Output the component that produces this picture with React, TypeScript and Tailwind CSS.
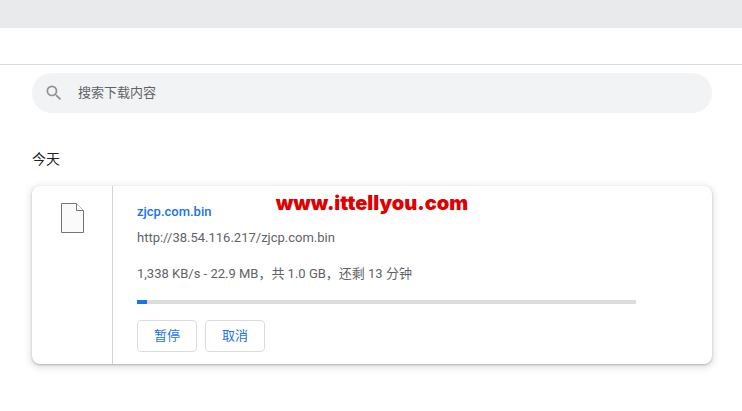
// DownloadsPage — search field on top, then one card per download grouped by day.

interface Download {
  id: string;
  name: string;
  url: string;
  status: string;
  percent: number;
}

const downloads: Download[] = [
  {
    id: "1",
    name: "zjcp.com.bin",
    url: "http://38.54.116.217/zjcp.com.bin",
    status: "1,338 KB/s - 22.9 MB，共 1.0 GB，还剩 13 分钟",
    percent: 2,
  },
];

export default function App() {
  return (
    <div className="min-h-screen bg-white font-['Roboto','Noto_Sans_CJK_SC',sans-serif] text-[13px] leading-5 text-[#5f6368]">
      {/* Browser chrome */}
      <div className="h-7 bg-[#e9eaec]" />
      <div className="h-[37px] border-b border-[#dadbdc]" />

      <main className="px-[30px] pt-2 pl-8">
        <SearchField />
        <h2 className="mt-9 text-sm leading-5 text-[#202124]">今天</h2>
        <div className="mt-[17px] flex flex-col gap-4">
          {downloads.map((item) => (
            <DownloadCard key={item.id} item={item} />
          ))}
        </div>
      </main>
    </div>
  );
}

function SearchField() {
  return (
    <label className="flex h-10 items-center gap-3.5 rounded-full bg-[#f1f3f4] px-3">
      <SearchIcon className="size-5 shrink-0 text-[#8f9194]" />
      <input
        type="search"
        aria-label="搜索下载内容"
        placeholder="搜索下载内容"
        className="min-w-0 flex-1 bg-transparent outline-none placeholder:text-[#5f6368]"
      />
    </label>
  );
}

function DownloadCard({ item }: { item: Download }) {
  return (
    <article className="relative flex rounded-lg bg-white shadow-[0_1px_2px_rgba(60,64,67,0.3),0_2px_6px_2px_rgba(60,64,67,0.15)]">
      <div className="flex w-20 shrink-0 justify-center pt-4">
        <FileIcon className="h-8 w-6" />
      </div>

      <div className="min-w-0 flex-1 border-l border-[#d3d3d3] pt-4 pr-[76px] pb-3 pl-6">
        <a href="#" className="block w-fit font-medium text-[#1a73e8]">
          {item.name}
        </a>
        <a href="#" className="mt-1.5 block w-fit">
          {item.url}
        </a>
        <p className="mt-4">{item.status}</p>

        <div
          role="progressbar"
          aria-label={item.name}
          aria-valuenow={item.percent}
          className="mt-4 h-1 bg-[#dddddd]"
        >
          <div className="h-full bg-[#1a73e8]" style={{ width: `${item.percent}%` }} />
        </div>

        <div className="mt-4 flex gap-2">
          <ActionButton label="暂停" />
          <ActionButton label="取消" />
        </div>
      </div>

      {/* Site watermark */}
      <div className="pointer-events-none absolute inset-x-0 top-[3px] text-center font-['Inter',sans-serif] text-xl leading-7 font-black text-[#e00000]">
        www.ittellyou.com
      </div>
    </article>
  );
}

function ActionButton({ label }: { label: string }) {
  return (
    <button
      type="button"
      className="h-8 w-[60px] rounded border border-[#dadce0] text-[#1a73e8]"
    >
      {label}
    </button>
  );
}

function SearchIcon({ className }: { className?: string }) {
  return (
    <svg className={className} viewBox="0 0 24 24" fill="currentColor" aria-hidden="true">
      <path d="M15.5 14h-.79l-.28-.27A6.471 6.471 0 0 0 16 9.5 6.5 6.5 0 1 0 9.5 16c1.61 0 3.09-.59 4.23-1.57l.27.28v.79l5 4.99L20.49 19l-4.99-5zm-6 0C7.01 14 5 11.99 5 9.5S7.01 5 9.5 5 14 7.01 14 9.5 11.99 14 9.5 14z" />
    </svg>
  );
}

function FileIcon({ className }: { className?: string }) {
  return (
    <svg className={className} viewBox="0 0 24 32" fill="#fafafa" stroke="#757575" aria-hidden="true">
      <path d="M1.5 1.5H16.5L23.5 8.5V30.5H1.5Z" />
      <path d="M16.5 1.5V8.5H23.5" />
    </svg>
  );
}
